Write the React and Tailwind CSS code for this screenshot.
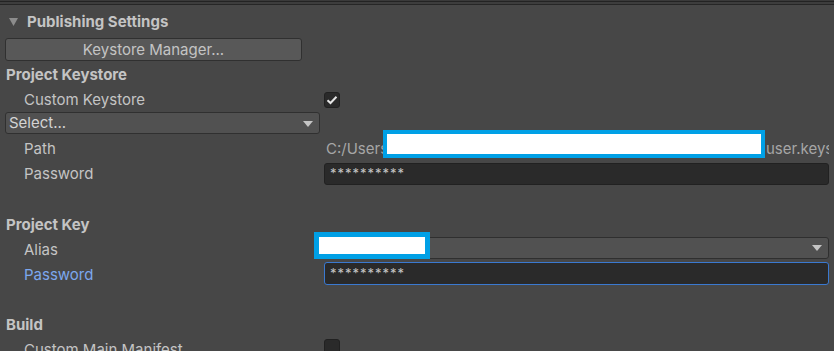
import React from "react";

const font = { fontFamily: "Inter, 'Noto Sans', sans-serif" };

function Arrow() {
  return (
    <svg width="10" height="6" viewBox="0 0 10 6" className="shrink-0">
      <path d="M0 0 H10 L5 6 Z" fill="#c4c4c4" />
    </svg>
  );
}

function Checkbox({ checked }) {
  return (
    <div className="w-[16px] h-[16px] rounded-[3px] bg-[#2a2a2a] border border-[#212121] flex items-center justify-center">
      {checked && (
        <svg width="12" height="10" viewBox="0 0 12 10">
          <path d="M1.5 5.2 L4.5 8 L10.5 1.8" fill="none" stroke="#e6e6e6" strokeWidth="2" />
        </svg>
      )}
    </div>
  );
}

function Row({ label, blue, children, top = "items-center" }) {
  return (
    <div className={"relative flex h-[25px] " + (top === "items-center" ? "items-center" : "items-start")}>
      <div
        className={
          "w-[324px] h-[25px] pl-[24px] pt-[2px] shrink-0 flex items-center " +
          (blue ? "text-[#7ca7ee]" : "text-[#c4c4c4]")
        }
      >
        {label}
      </div>
      <div className={"flex-1 pr-[5px] flex items-center min-w-0 " + (top === "items-center" ? "" : top)}>
        {children}
      </div>
    </div>
  );
}

function Heading({ children }) {
  return (
    <div className="h-[25px] flex items-center pl-[6px] pt-[2px] font-bold text-[#c4c4c4]">{children}</div>
  );
}

export default function App() {
  return (
    <div className="w-[834px] h-[351px] overflow-hidden bg-[#474747] text-[15px]" style={font}>
      {/* top splitter lines */}
      <div className="h-[1px] bg-[#3a3a3a]" />
      <div className="h-[1px] bg-[#232323]" />
      <div className="h-[2px] bg-[#3d3d3d]" />
      <div className="h-[1px] bg-[#262626]" />

      <div className="h-[31px] flex items-center pl-[9px] pt-[3px] gap-[9px]">
        <svg width="9" height="8" viewBox="0 0 9 8">
          <path d="M0 0 H9 L4.5 8 Z" fill="#8c8c8c" />
        </svg>
        <span className="font-bold text-[#c4c4c4]">Publishing Settings</span>
      </div>

      <div className="px-[5px] mt-[2px]">
        <button className="w-[297px] h-[23px] pt-[1px] rounded-[3px] bg-[#585858] border border-[#303030] text-[#c4c4c4] flex items-center justify-center">
          Keystore Manager...
        </button>
      </div>

      <div className="mt-[1px]">
        <Heading>Project Keystore</Heading>
        <Row label="Custom Keystore">
          <Checkbox checked />
        </Row>
        <div className="h-[24px] px-[5px]">
          <div className="w-[315px] h-[22px] pt-[1px] rounded-[3px] bg-[#515151] border border-[#303030] flex items-center justify-between pl-[3px] pr-[6px] text-[#d4d4d4]">
            <span>Select...</span>
            <Arrow />
          </div>
        </div>
        <Row label="Path">
          <div className="flex-1 overflow-hidden whitespace-nowrap text-[#a6a6a6] pl-[2px] pt-[2px] flex">
            <span className="w-[440px] shrink-0 overflow-hidden">C:/Users/</span>
            <span>user.keystore</span>
          </div>
          <div className="absolute left-[383px] top-[-6px] w-[382px] h-[28px] border-[4px] border-[#00a0e6] bg-white" />
        </Row>
        <Row label="Password">
          <div className="flex-1 h-[22px] rounded-[3px] bg-[#2a2a2a] border border-[#212121] flex items-center pl-[5px] text-[13px] text-[#c4c4c4] tracking-[1px]">
            **********
          </div>
        </Row>

        <div className="h-[26px]" />
        <Heading>Project Key</Heading>
        <Row label="Alias" top="self-start">
          <div className="flex-1 h-[22px] rounded-[3px] bg-[#515151] border border-[#2f2f2f] flex items-center justify-end pr-[6px]">
            <Arrow />
          </div>
          <div className="absolute left-[314px] top-[-5px] w-[116px] h-[27px] border-[5px] border-[#00a0e6] bg-white" />
        </Row>
        <Row label="Password" blue top="self-start">
          <div className="flex-1 h-[23px] rounded-[3px] bg-[#2a2a2a] border border-[#3a79d0] flex items-center pl-[5px] text-[13px] text-[#c4c4c4] tracking-[1px]">
            **********
          </div>
        </Row>

        <div className="h-[25px]" />
        <Heading>Build</Heading>
        <Row label="Custom Main Manifest" top="self-start pt-[2px]">
          <Checkbox />
        </Row>
      </div>
    </div>
  );
}
